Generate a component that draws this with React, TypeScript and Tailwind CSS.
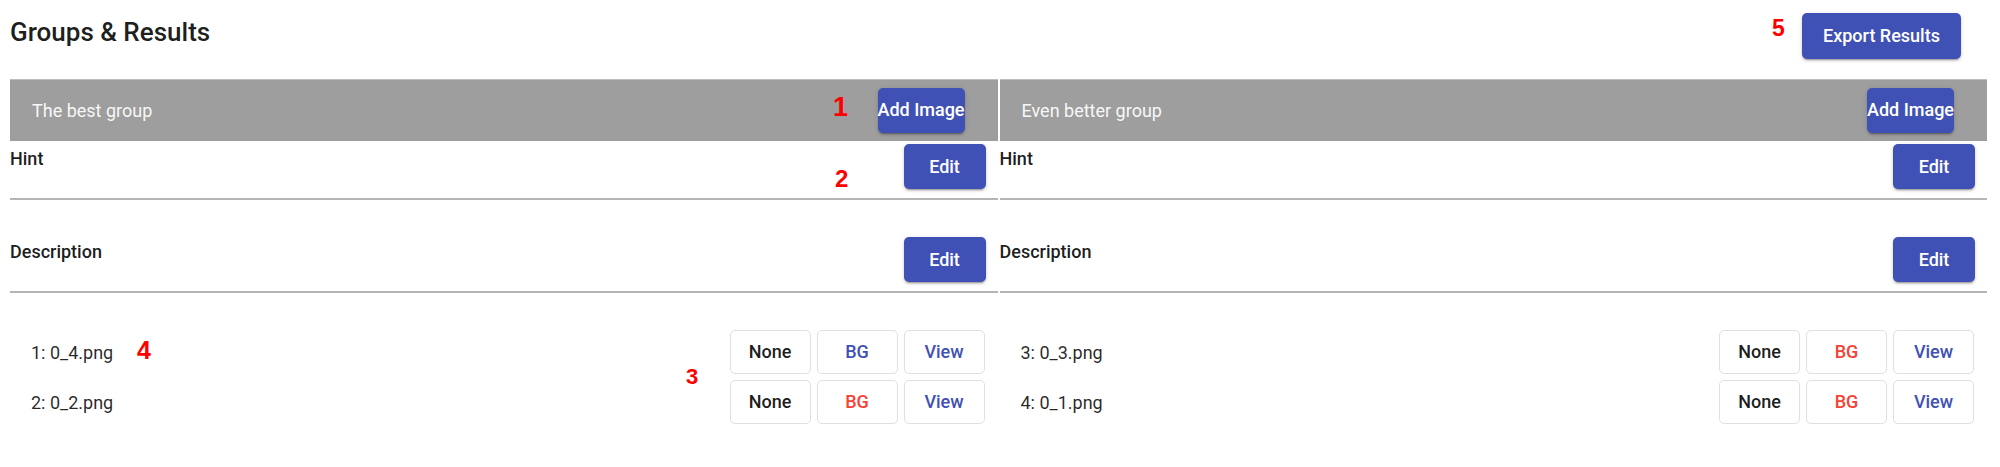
import React from "react";

type Row = { label: string; bg: "blue" | "red" };

const groups: { name: string; rows: Row[] }[] = [
  {
    name: "The best group",
    rows: [
      { label: "1: 0_4.png", bg: "blue" },
      { label: "2: 0_2.png", bg: "red" },
    ],
  },
  {
    name: "Even better group",
    rows: [
      { label: "3: 0_3.png", bg: "red" },
      { label: "4: 0_1.png", bg: "red" },
    ],
  },
];

function Contained({ children, className }: { children: React.ReactNode; className: string }) {
  return (
    <button
      className={
        "flex items-center justify-center whitespace-nowrap rounded-[5px] bg-[#3f51b5] text-white font-medium text-[18px] leading-none shadow-[0_3px_1px_-2px_rgba(0,0,0,0.2),0_2px_2px_0_rgba(0,0,0,0.14),0_1px_5px_0_rgba(0,0,0,0.12)] " +
        className
      }
    >
      {children}
    </button>
  );
}

function Outlined({ children, color }: { children: React.ReactNode; color: string }) {
  return (
    <button
      className={
        "flex h-[44px] w-[81px] items-center justify-center rounded-[5px] border border-[#e0e0e0] bg-white text-[18px] font-medium leading-none " +
        color
      }
    >
      {children}
    </button>
  );
}

function Group({ name, rows }: { name: string; rows: Row[] }) {
  return (
    <div className="flex flex-col">
      <div className="flex h-[62px] items-center justify-between border-t border-[#bdbdbd] bg-[#9e9e9e] pl-[22px] pr-[33px]">
        <span className="text-[18px] text-white/95">{name}</span>
        <Contained className="h-[45px] w-[87px] mt-[-1px]">Add Image</Contained>
      </div>
      <div className="flex h-[59px] items-start justify-between border-b-2 border-[#b5b5b5] pr-[12px]">
        <span className="pt-[8px] text-[18px] font-medium leading-[20px] text-black/90">Hint</span>
        <Contained className="mt-[3px] h-[45px] w-[82px]">Edit</Contained>
      </div>
      <div className="flex h-[93px] items-start justify-between border-b-2 border-[#b5b5b5] pr-[12px]">
        <span className="pt-[42px] text-[18px] font-medium leading-[20px] text-black/90">Description</span>
        <Contained className="mt-[37px] h-[45px] w-[82px]">Edit</Contained>
      </div>
      <div className="flex flex-col gap-[6px] pl-[21px] pr-[13px] pt-[37px]">
        {rows.map((r) => (
          <div key={r.label} className="flex h-[44px] items-center justify-between">
            <span className="text-[18px] text-black/85">{r.label}</span>
            <div className="flex gap-[6px]">
              <Outlined color="text-black/90">None</Outlined>
              <Outlined color={r.bg === "blue" ? "text-[#3f51b5]" : "text-[#f44336]"}>BG</Outlined>
              <Outlined color="text-[#3f51b5]">View</Outlined>
            </div>
          </div>
        ))}
      </div>
    </div>
  );
}

export default function App() {
  return (
    <div
      className="relative h-[467px] w-full bg-white pl-[10px] pr-[13px]"
      style={{ fontFamily: "Roboto, 'Liberation Sans', sans-serif" }}
    >
      <div className="flex h-[79px] items-start justify-between">
        <h1 className="mt-[17px] text-[26px] font-medium leading-[30px] text-black/90">Groups &amp; Results</h1>
        <Contained className="mr-[26px] mt-[13px] h-[46px] w-[159px]">Export Results</Contained>
      </div>
      <div className="grid grid-cols-2 gap-[2px]">
        {groups.map((g) => (
          <Group key={g.name} name={g.name} rows={g.rows} />
        ))}
      </div>

      {/* red annotations */}
      <span
        className="absolute left-[833px] top-[94px] text-[27px] font-bold leading-none text-[#ff0000]"
        style={{ fontFamily: "'Liberation Sans', sans-serif" }}
      >
        1
      </span>
      <span
        className="absolute left-[835px] top-[167px] text-[24px] font-bold leading-none text-[#ff0000]"
        style={{ fontFamily: "'Liberation Sans', sans-serif" }}
      >
        2
      </span>
      <span
        className="absolute left-[686px] top-[366px] text-[22px] font-bold leading-none text-[#ff0000]"
        style={{ fontFamily: "'Liberation Sans', sans-serif" }}
      >
        3
      </span>
      <span
        className="absolute left-[137px] top-[338px] text-[25px] font-bold leading-none text-[#ff0000]"
        style={{ fontFamily: "'Liberation Sans', sans-serif" }}
      >
        4
      </span>
      <span
        className="absolute left-[1772px] top-[17px] text-[23px] font-bold leading-none text-[#ff0000]"
        style={{ fontFamily: "'Liberation Sans', sans-serif" }}
      >
        5
      </span>
    </div>
  );
}
